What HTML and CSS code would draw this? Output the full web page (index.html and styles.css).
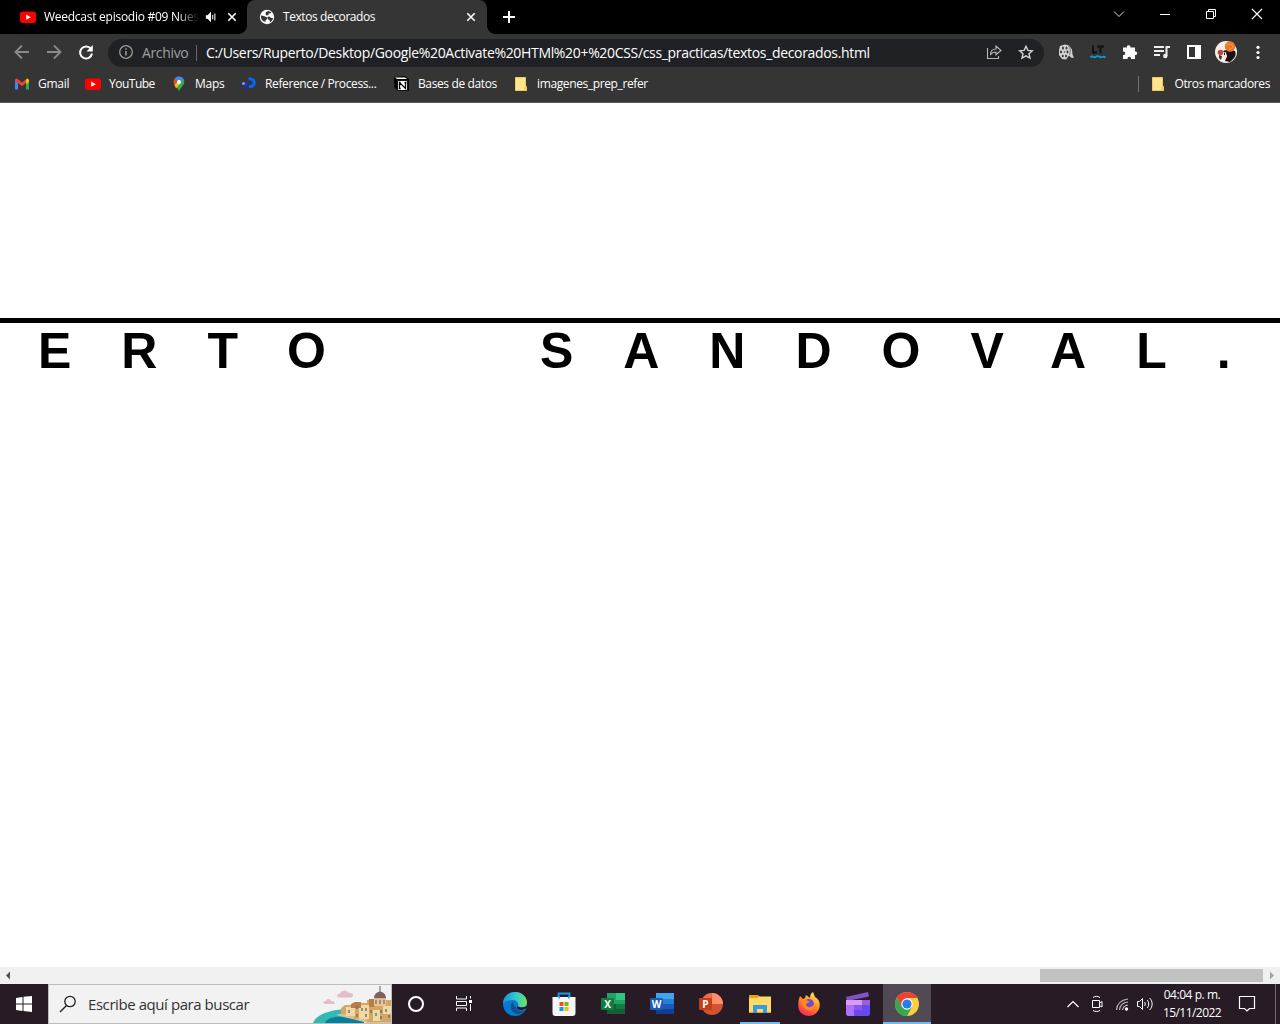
FILE: index.html
```html
<!DOCTYPE html>
<html lang="es">
<head>
<meta charset="utf-8">
<title>Textos decorados</title>
<link rel="stylesheet" href="styles.css">
</head>
<body>
<svg class="defs" width="0" height="0">
  <symbol id="yt" viewBox="0 0 16 16"><rect y="2.5" width="16" height="11.5" rx="3" fill="#f00"/><path d="M6.2 5.6v5.2l4.6-2.6z" fill="#fff"/></symbol>
  <symbol id="close" viewBox="0 0 16 16"><path d="M4.300 4.300l7.400 7.400M11.700 4.300l-7.400 7.400" stroke="#fff" stroke-width="1.6"/></symbol>
  <symbol id="folder" viewBox="0 0 16 16"><path d="M2.5 1.5h10v9h1v4h-11z" fill="#ffe591" stroke="#efcb60"/><path d="M11 14.5v-3.5h2.5v3.500z" fill="#f6cf52"/></symbol>
</svg>

<header class="tabs">
  <div class="tab quiet">
    <svg class="i16"><use href="#yt"/></svg>
    <span class="tab-title faded">Weedcast episodio #09 Nues</span>
    <svg class="sound" width="12" height="12" viewBox="0 0 14 14"><path d="M1 5h2l4-4v12L3 9H1z" fill="#fff"/><path d="M9 4.500v5M11.500 3v8" stroke="#fff" stroke-width="1.200"/></svg>
    <svg class="i16"><use href="#close"/></svg>
  </div>
  <div class="tab active">
    <svg class="i16" viewBox="0 0 16 16"><circle cx="8" cy="8" r="7.200" fill="#fff"/><path d="M1.800 6.500l3.200.5 3 1.500v1.700l-1.500 1v1.800C3.500 12.500 1.700 10 1.800 6.500zM7 3l2.500-1 3 1.500-1.500 1H9.500V6l-2 .5L6.500 5zM8.500 8l2-.5 1.500 1.500h2c-.3 2-1.500 3.500-3 4.200l-.5-2.200-2-1z" fill="#353535"/></svg>
    <span class="tab-title second">Textos decorados</span>
    <svg class="i16"><use href="#close"/></svg>
  </div>
  <svg class="plus" width="14" height="14" viewBox="0 0 14 14"><path d="M7 1v12M1 7h12" stroke="#fff" stroke-width="2"/></svg>
  <div class="window-buttons">
    <svg width="12" height="12" viewBox="0 0 12 12"><path d="M1 3.500l5 5 5-5" fill="none" stroke="#ddd"/></svg>
    <svg width="12" height="12" viewBox="0 0 12 12"><path d="M1 6.500h10" stroke="#fff"/></svg>
    <svg width="12" height="12" viewBox="0 0 12 12"><path d="M1.500 3.500h7v7h-7zM3.500 3.500v-2h7v7h-2" fill="none" stroke="#fff"/></svg>
    <svg width="12" height="12" viewBox="0 0 12 12"><path d="M1 1l10 10M11 1L1 11" stroke="#fff" stroke-width="1.200"/></svg>
  </div>
</header>

<nav class="toolbar">
  <svg class="i16" viewBox="0 0 16 16"><path d="M15 7H2M8 .5L1.500 7 8 13.500" fill="none" stroke="#8b8b8b" stroke-width="1.800"/></svg>
  <svg class="i16" viewBox="0 0 16 16"><path d="M1 7h13M8 .5L14.500 7 8 13.500" fill="none" stroke="#8b8b8b" stroke-width="1.800"/></svg>
  <svg class="i16" viewBox="0 0 16 16"><path d="M13 4A6 6 0 1 0 14 8.500" fill="none" stroke="#fff" stroke-width="2"/><path d="M14.800 0v6.500H8.500z" fill="#fff"/></svg>
  <div class="address">
    <svg class="i16" viewBox="0 0 16 16"><circle cx="8" cy="7" r="6.300" fill="none" stroke="#9a9da1" stroke-width="1.300"/><path d="M8 6v4.500M8 3.200v1.600" stroke="#9a9da1" stroke-width="1.500"/></svg>
    <span class="scheme">Archivo</span>
    <span class="url">C:/Users/Ruperto/Desktop/Google%20Activate%20HTMl%20+%20CSS/css_practicas/textos_decorados.html</span>
    <svg class="i16" viewBox="0 0 16 16"><path d="M1.500 3v10.500h11V11M4.500 10c0-4 2-6 5.500-6V1l5 4.500-5 4.200V7C7.500 7 5.500 8 4.500 10z" fill="none" stroke="#b5b6b8" stroke-width="1.100"/></svg>
    <svg class="i16" viewBox="0 0 16 16"><path d="M8 1.300l1.900 4.100 4.400.4-3.300 2.900 1 4.400-4-2.300-4 2.300 1-4.400-3.300-2.900 4.400-.4z" fill="none" stroke="#d2d3d5" stroke-width="1.400"/></svg>
  </div>
  <div class="extensions">
    <svg class="i16" viewBox="0 0 16 16"><path d="M2 2L7 .5l4 1 3 4 .5 5 1.500 3.500-3-.5-2-2-3 4-4-.5-3-4V6z" fill="#d2d2d2"/><g fill="#3b3b3b"><ellipse cx="5" cy="4" rx="1" ry="1.500"/><ellipse cx="8.500" cy="4" rx="1" ry="1.500"/><ellipse cx="3" cy="8" rx="1" ry="1.400"/><circle cx="6.500" cy="8" r=".8"/><ellipse cx="9.500" cy="8" rx="1" ry="1.400"/><ellipse cx="4.800" cy="12" rx="1" ry="1.300"/><ellipse cx="8" cy="12" rx="1" ry="1.300"/></g><path d="M10.500 2c2 2 2.500 5 1 9" fill="none" stroke="#777"/></svg>
    <svg class="i16" viewBox="0 0 16 16"><path d="M3 1.500v7h4M7 2.500h7M10.500 2.500v7" fill="none" stroke="#111" stroke-width="2"/><path d="M.5 13.500c2-3 3 1 5-.5s3-1 4.500 0 3-1.500 5.500.5" fill="none" stroke="#0999dc" stroke-width="1.800"/></svg>
    <svg class="i16" viewBox="0 0 16 16"><path d="M1 3.500h4C4 .5 9 .5 8.500 3.500H13v4c3-.5 3 4 0 3.500v4H9c.5-3-4-3-3.500 0H1v-4c3 .5 3-4 0-3.500z" fill="#fff"/></svg>
    <svg class="i16" viewBox="0 0 16 16"><path d="M0 3h10M0 7h10M0 11h6" stroke="#eee" stroke-width="1.800"/><path d="M12.500 12V3H16" fill="none" stroke="#eee" stroke-width="2"/><circle cx="11.300" cy="12" r="2.200" fill="#eee"/></svg>
    <svg class="i16" viewBox="0 0 16 16"><path d="M1 1h14v14H1zM3 3v10h6V3z" fill="#fff" fill-rule="evenodd"/></svg>
    <svg class="avatar" viewBox="0 0 22 22"><circle cx="11" cy="11" r="11" fill="#f6eee8"/><path d="M8 10l6-2 6 2c2 4-1 8-5 11l-5-1 2-5z" fill="#191114"/><circle cx="15" cy="5.500" r="5.200" fill="#e9772c"/><path d="M11 5c3-3 6-2 7 0M14 8c2 0 4-1 4-3" fill="none" stroke="#f5a045"/><circle cx="5.500" cy="11.500" r="2.800" fill="#b94b42"/><path d="M4 14l3 1-1 4-2-2z" fill="#442a27"/><path d="M8 12l3-1 1 5-3 2z" fill="#f4e7df"/><path d="M9 12h1v2H9z" fill="#191114"/></svg>
    <svg class="i16" viewBox="0 0 16 16"><g fill="#fff"><circle cx="8" cy="3.300" r="1.600"/><circle cx="8" cy="8.500" r="1.600"/><circle cx="8" cy="13.500" r="1.600"/></g></svg>
  </div>
</nav>

<nav class="bookmarks">
  <div class="bm gmail"><svg class="i16" viewBox="0 0 16 16"><path d="M1 4v9.500h3V7z" fill="#4285f4"/><path d="M12 7v6.500h3V4z" fill="#34a853"/><path d="M1 3.500l2-1 5 4 5-4 2 1V5l-7 5-7-5z" fill="#ea4335"/><path d="M12 3.500l1.500-1L15 4v2l-3 2z" fill="#fbbc04"/></svg><span>Gmail</span></div>
  <div class="bm youtube"><svg class="i16"><use href="#yt"/></svg><span>YouTube</span></div>
  <div class="bm maps"><svg class="i16" viewBox="0 0 16 16"><path d="M8 .5A5.300 5.300 0 0 0 2.700 6c0 4 4 5 5.300 9.500C9.300 11 13.300 10 13.300 6A5.300 5.300 0 0 0 8 .5z" fill="#34a853"/><path d="M4 2.500A5.300 5.300 0 0 1 12.500 3L8 8z" fill="#4285f4"/><path d="M4 2.500l3 3-3.500 4-.8-3C2.500 5 3 3.500 4 2.500z" fill="#ea4335"/><path d="M3.500 9l3-3.500L9 8l-4 4.500z" fill="#fbbc04"/><circle cx="8" cy="6" r="2" fill="#fff"/></svg><span>Maps</span></div>
  <div class="bm reference"><svg class="i16" viewBox="0 0 16 16"><path d="M7.500 3h2a3.500 3.500 0 0 1 0 7.500H8" fill="none" stroke="#0468ff" stroke-width="3"/><path d="M5.500 6v3a3 3 0 0 1-3 3" fill="none" stroke="#1d32aa" stroke-width="3"/><circle cx="2.500" cy="7.500" r="1.500" fill="#7997ff"/></svg><span>Reference / Process...</span></div>
  <div class="bm bases"><svg class="i16" viewBox="0 0 16 16"><path d="M0 1l11-1 4 3v12H4l-4-4z" fill="#050505"/><path d="M3.500 4.500h10v10h-10z" fill="#fff" stroke="#111"/><path d="M1 1.500h10l2 1.500H3z" fill="#fff"/><path d="M5.500 12.500v-6l6 6v-6M4.700 6.500h2M10.500 6.500h2M4.700 12.500h2" fill="none" stroke="#000" stroke-width="1.300"/></svg><span>Bases de datos</span></div>
  <div class="bm images"><svg class="i16"><use href="#folder"/></svg><span>imagenes_prep_refer</span></div>
  <div class="bm others"><svg class="i16"><use href="#folder"/></svg><span>Otros marcadores</span></div>
</nav>

<main class="page">
  <h1 class="name">ERTO SANDOVAL.</h1>
</main>
<div class="scrollbar">
  <svg width="17" height="17" viewBox="0 0 17 17"><path d="M10 4.500v8L6 8.500z" fill="#505050"/></svg>
  <div class="thumb"></div>
  <svg width="17" height="17" viewBox="0 0 17 17"><path d="M7 4.500v8l4-4z" fill="#a3a3a3"/></svg>
</div>

<footer class="taskbar">
  <div class="start"><svg width="16" height="16" viewBox="0 0 16 16"><path d="M0 2l6.500-1v6.500H0zM7.500.8L16 0v7.500H7.500zM0 8.500h6.500V15L0 14zM7.500 8.500H16V16l-8.500-1z" fill="#fff"/></svg></div>
  <div class="search">
    <svg width="18" height="18" viewBox="0 0 18 18"><circle cx="11" cy="6.500" r="5.200" fill="none" stroke="#222" stroke-width="1.300"/><path d="M7.500 10.500L1 17" stroke="#222" stroke-width="1.500"/></svg>
    <span>Escribe aquí para buscar</span>
    <svg class="scene" width="78" height="38" viewBox="0 0 78 38"><path d="M0 38c3-8 15-13 34-14v14z" fill="#31b9b3"/><path d="M12 38c2-5 10-7 17-6l22 3v3z" fill="#087f9a"/><path d="M23 30l12-3 43 7v4H55z" fill="#dcc095"/><g fill="#d4a766"><path d="M28 23l4-3h7v9H28zM41 18h13v16H41zM54 15h24v22H54z"/></g><path d="M33 22h9v9h-9zM46 20h10v14H46zM60 25h7v11h-7zM70 21h8v8h-8z" fill="#f2d8a3"/><path d="M38 19l4-2h6v6h-10zM56 14h6v8h-6z" fill="#b87d49"/><path d="M61 13.500c0-9 12-9 12 0z" fill="#80605f"/><path d="M61 13.500h12V21H61z" fill="#e5c298"/><path d="M67 1v6M63 15v4M67 15v4M71 15v4" stroke="#73554c"/><path d="M36 25v3M44 21v3M49 23v3M53 23v3M58 25v3M63 28v3M68 25v3M73 24v3M76 30v3M44 29v3M53 29v3M68 31v3" stroke="#5d7375" stroke-width="1.400"/><path d="M12 19c-3-1-2-3 1-3 1-3 5-2 5 0 4-.5 5 3 2 3zM26 12.500c-3-1-2-4 1-4 1-4 8-4 8-.5 5-1 7 4 3 4.500z" fill="#e3bdc7"/></svg>
  </div>
  <div class="task"><svg class="i24" viewBox="0 0 24 24"><circle cx="12" cy="12" r="7" fill="none" stroke="#fff" stroke-width="2"/></svg></div>
  <div class="task"><svg class="i24" viewBox="0 0 24 24"><path d="M4.500 4v3h10V4M4.500 19v-3h10v3M4.500 9.500h10v4h-10zM18.500 4v2.500M18.500 12v7" fill="none" stroke="#fff"/><path d="M17 8h3v3h-3z" fill="#fff"/></svg></div>
  <div class="task edge"><svg class="i24" viewBox="0 0 24 24"><defs><linearGradient id="eg" x1="0" x2="1"><stop stop-color="#188fe0"/><stop offset=".55" stop-color="#35c9cc"/><stop offset="1" stop-color="#72e45a"/></linearGradient></defs><circle cx="12" cy="12" r="12" fill="#087bd0"/><path d="M0 12C0 5 5 0 12 0c7 0 12 5 12 10.500 0 5-7 7-9.500 4.500 2-3 0-7-5-7C5 8 1.500 10 0 12z" fill="url(#eg)"/><path d="M10 10c-5 4-1 13 7 12l5-4c-4 2-9 1-9-3-2-1-3-3-3-5z" fill="#124e94"/><path d="M14.500 14c-2 4 4 5 7 3l2.500-1v-2c-3 1.500-7 2-9.500 0z" fill="#271c26"/></svg></div>
  <div class="task"><svg class="i24" viewBox="0 0 24 24"><path d="M6.500 6V1.500h11V6" fill="none" stroke="#159ae9" stroke-width="1.800"/><path d="M.5 5h23v16a3 3 0 0 1-3 3h-17a3 3 0 0 1-3-3z" fill="#f5f5f5"/><path d="M6.500 4h1.500v2.500H6.500zM16 4h1.500v2.500H16z" fill="#159ae9"/><path d="M7.500 10h4v4h-4z" fill="#f25022"/><path d="M12.500 10h4v4h-4z" fill="#7fba00"/><path d="M7.500 15h4v4h-4z" fill="#00a4ef"/><path d="M12.500 15h4v4h-4z" fill="#ffb900"/></svg></div>
  <div class="task"><svg class="i24" viewBox="0 0 24 24"><path d="M6 1h18v21H6z" fill="#21a366"/><path d="M15 1h9v7h-9z" fill="#33c481"/><path d="M6 12h18v10H6z" fill="#185c37"/><path d="M15 12h9v5h-9z" fill="#107c41"/><rect y="6" width="13" height="12" rx="1" fill="#107c41"/><text class="office" x="6.500" y="15.700">X</text></svg></div>
  <div class="task"><svg class="i24" viewBox="0 0 24 24"><path d="M6 1h18v21H6z" fill="#185abd"/><path d="M6 1h18v6H6z" fill="#41a5ee"/><path d="M6 7h18v5H6z" fill="#2b7cd3"/><path d="M6 17h18v5H6z" fill="#103f91"/><rect y="6" width="13" height="12" rx="1" fill="#185abd"/><text class="office" x="6.500" y="15.700">W</text></svg></div>
  <div class="task"><svg class="i24" viewBox="0 0 24 24"><circle cx="13" cy="12" r="11" fill="#d35230"/><path d="M13 1a11 11 0 0 0-11 11h11z" fill="#ed6c47"/><path d="M13 1a11 11 0 0 1 11 11H13z" fill="#ff8f6b"/><rect y="6" width="13" height="12" rx="1" fill="#c43e1c"/><text class="office" x="6.500" y="15.700">P</text></svg></div>
  <div class="task open"><svg class="i24" viewBox="0 0 24 24"><path d="M1 3h9l2 2h11v16H1z" fill="#e3a218"/><path d="M1 6h8l2-1.500h12V20H1z" fill="#ffd968"/><path d="M5 21v-8h14v8h-4v-4H9v4z" fill="#379be0"/></svg></div>
  <div class="task"><svg class="i24" viewBox="0 0 24 24"><defs><linearGradient id="fg" x1=".8" y1="0" x2=".3" y2="1"><stop stop-color="#fff44f"/><stop offset=".5" stop-color="#ff8a20"/><stop offset="1" stop-color="#ff225e"/></linearGradient></defs><path d="M2 7l1-3 3 3 2-1 1-3 4 3c0-3 1-5 3-6l2 5c4 2 6 7 4 12-4 9-16 9-20 1-1-4-1-8 0-11z" fill="url(#fg)"/><circle cx="12" cy="12" r="5" fill="#7749d2"/><path d="M5 8c4-1 6 1 8 2-2 1-4 1-4 3 1 3 6 3 8-1 1 10-13 8-12-4z" fill="#ff8a1c"/></svg></div>
  <div class="task"><svg class="i24" viewBox="0 0 24 24"><path d="M0 5L22 0l1 4.500L1 9z" fill="#8352cb"/><path d="M0 8h24v14a2 2 0 0 1-2 2H2a2 2 0 0 1-2-2z" fill="#6749ef"/><path d="M0 8h16v5H0z" fill="#d99cf6"/><path d="M16 8h8v5h-8z" fill="#9861db"/><path d="M0 13h8v11H2l-2-2z" fill="#ab72fa"/><path d="M8 13h8v5H8z" fill="#8858ec"/></svg></div>
  <div class="task current"><svg class="i24" viewBox="0 0 24 24"><circle cx="12" cy="12" r="12" fill="#ffcd40"/><path d="M1.600 6A12 12 0 0 1 22.400 6H12L7 15z" fill="#ea4335"/><path d="M1.600 6A12 12 0 0 0 12 24l5-9H7z" fill="#34a853"/><circle cx="12" cy="12" r="5.700" fill="#fff"/><circle cx="12" cy="12" r="4.600" fill="#2a7de9"/></svg></div>
  <div class="tray">
    <svg class="chev" width="14" height="16" viewBox="0 0 14 16"><path d="M1.500 11L7 5.500l5.500 5.500" fill="none" stroke="#fff" stroke-width="1.200"/></svg>
    <svg class="meet" width="14" height="18" viewBox="0 0 14 18"><path d="M2.500 5.500h7v7h-7zM9.500 8l2.500-1.500v5.500l-2.500-1.500M3 2.500c2-1.500 5-1.500 7 0M3 15.500c2 1.300 5 1.300 7 0" fill="none" stroke="#fff"/></svg>
    <svg class="wifi" width="14" height="16" viewBox="0 0 14 16"><path d="M1.500 14C2 8 6 4 13 3M4.500 14C5 9.500 8 6.500 13 6M7.500 14c.5-3 2-4.500 5.500-5" fill="none" stroke="#bbb" stroke-width="1.200"/><circle cx="11.500" cy="13" r="1.700" fill="#fff"/></svg>
    <svg class="volume" width="18" height="16" viewBox="0 0 18 16"><path d="M1.500 5.500h2l3-3v11l-3-3h-2zM8.500 6c1 1 1 3 0 4M11 4c2.300 2 2.300 6 0 8M13.500 2c3.500 3 3.500 9 0 12" fill="none" stroke="#fff"/></svg>
    <div class="clock"><span>04:04 p. m.</span><span class="date">15/11/2022</span></div>
    <svg class="note" width="18" height="18" viewBox="0 0 18 18"><path d="M1.500 1.500h15v12h-5L9 16l-2.500-2.500h-5z" fill="none" stroke="#fff" stroke-width="1.200"/></svg>
  </div>
</footer>
</body>
</html>
```
FILE: styles.css
```css
* { box-sizing: border-box; }
body { margin: 0; width: 1280px; height: 1024px; display: flex; flex-direction: column; overflow: hidden; background: #fff; font-family: "Open Sans", "Noto Sans", sans-serif; font-size: 12px; color: #fff; }
svg { display: block; flex: none; overflow: visible; }
.defs { display: none; }
span { white-space: nowrap; }
.i16 { width: 16px; height: 16px; }
.i24 { width: 24px; height: 24px; }

.tabs { height: 34px; flex: none; display: flex; align-items: center; background: #000; }
.tab { height: 34px; display: flex; align-items: center; }
.quiet { width: 247px; padding-left: 20px; }
.tab-title { width: 155px; flex: none; margin-left: 8px; padding-bottom: 1px; letter-spacing: -.26px; }
.faded { -webkit-mask-image: linear-gradient(90deg, #000 86%, transparent); mask-image: linear-gradient(90deg, #000 86%, transparent); }
.sound { margin: 0 7px 0 6px; }
.active { position: relative; width: 240px; padding-left: 12px; background: #353535; border-radius: 8px 8px 0 0; }
.active::before, .active::after { content: ""; position: absolute; bottom: 0; width: 8px; height: 8px; }
.active::before { left: -8px; background: radial-gradient(circle at 0 0, #000 7.500px, #353535 8px); }
.active::after { right: -8px; background: radial-gradient(circle at 100% 0, #000 7.500px, #353535 8px); }
.second { width: 180px; letter-spacing: -.42px; }
.plus { margin-left: 15px; }
.window-buttons { margin: -6px 17px 0 auto; display: flex; gap: 34px; }

.toolbar { height: 35px; flex: none; display: flex; align-items: center; gap: 16px; padding: 1px 14px 0; background: #353535; }
.address { width: 936px; height: 28px; margin: 1px 0 0 -2px; padding: 0 10px; display: flex; align-items: center; border-radius: 14px; background: #202124; font-size: 14px; }
.toolbar > svg { margin-top: 1px; }
.scheme { width: 55px; margin-left: 8px; padding-right: 7px; line-height: 16px; border-right: 1px solid #66686b; color: #9aa0a6; letter-spacing: -.35px; }
.url { width: 780px; margin-left: 9px; letter-spacing: -.33px; }
.address .i16:last-child { margin-left: 16px; }
.extensions { display: flex; align-items: center; gap: 16px; margin-left: -2px; }
.avatar { width: 22px; height: 22px; margin: 0 -3px; }

.bookmarks { height: 34px; flex: none; display: flex; align-items: center; padding: 0 10px 4px 14px; background: #353535; border-bottom: 1px solid #5a5a5a; }
.bm { display: flex; align-items: center; gap: 8px; letter-spacing: -.38px; }
.gmail { width: 71px; letter-spacing: -.25px; }
.youtube { width: 86px; letter-spacing: -.5px; }
.maps { width: 70px; letter-spacing: -.25px; }
.reference { width: 153px; }
.bases { width: 119px; }
.others { height: 16px; margin-left: auto; padding-left: 11px; border-left: 1px solid #737373; }

.page { flex: 1; padding-top: 215px; overflow: hidden; }
.name { margin: 0; padding-left: 38px; border-top: 5px solid #000; font: bold 50px/57px "Liberation Sans", Arial, sans-serif; letter-spacing: 50px; word-spacing: 100px; white-space: nowrap; color: #000; }
.scrollbar { height: 17px; flex: none; display: flex; background: #f0f0f0; }
.thumb { width: 223px; height: 13px; margin: 2px 0 0 auto; background: #c1c1c1; }

.taskbar { height: 40px; flex: none; display: flex; background: #271c26; }
.start { width: 48px; display: flex; align-items: center; justify-content: center; }
.search { width: 344px; display: flex; align-items: center; padding-left: 10px; background: #f2f2f2; border: 1px solid #bdbdbd; color: #333; font-size: 15px; }
.search span { width: 226px; margin-left: 11px; letter-spacing: -.43px; }
.task { width: 48px; margin-right: 1px; display: flex; align-items: center; justify-content: center; }
.task:nth-child(3), .task:nth-child(4) { width: 48px; margin: 0; }
.edge { margin-left: 3px; }
.open { width: 40px; margin: 0 5px 0 4px; box-shadow: inset 0 -2px #76b9ed; }
.current { background: #514953; box-shadow: inset 0 -2px #76b9ed; }
.office { fill: #fff; font: bold 10px "Open Sans", sans-serif; text-anchor: middle; }
.tray { margin-left: auto; width: 214px; display: flex; align-items: center; border-right: 1px solid #716a71; margin-right: 4px; }
.chev { margin-left: 4px; }
.meet { margin-left: 10px; }
.wifi { margin-left: 11px; }
.volume { margin-left: 7px; }
.clock { width: 60px; margin-left: 8px; display: flex; flex-direction: column; align-items: center; line-height: 18px; letter-spacing: -.45px; }
.date { letter-spacing: -.55px; }
.note { margin-left: 16px; }
```
